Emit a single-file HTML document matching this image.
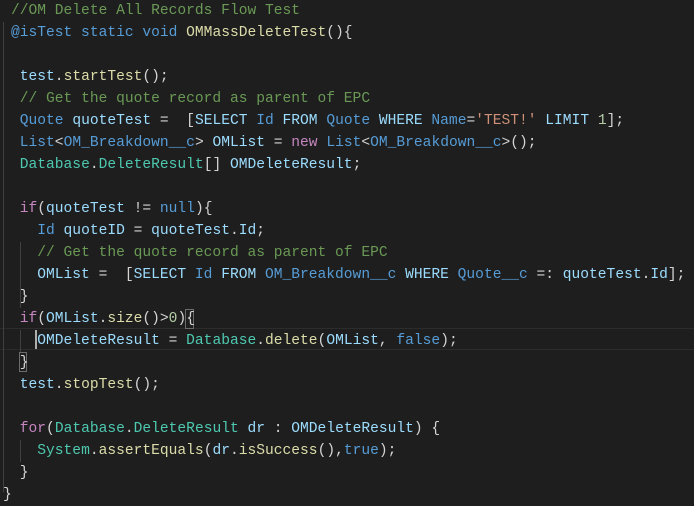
<!DOCTYPE html>
<html><head><style>
html,body{margin:0;padding:0;background:#1e1e1e;}
body{width:694px;height:502px;overflow:hidden;position:relative;font-family:"Liberation Mono",monospace;font-size:14.6px;}
.l{position:absolute;left:11px;height:22px;line-height:22px;white-space:pre;color:#9cdcfe;}
.c{color:#6a9955}.k{color:#569cd6}.p{color:#c586c0}.t{color:#4ec9b0}.f{color:#dcdcaa}.s{color:#ce9178}.n{color:#b5cea8}.w{color:#d4d4d4}
.g{position:absolute;width:1px;background:#404040;}
</style></head><body>
<div style="position:absolute;left:0;top:328px;width:694px;height:20px;border-top:1px solid #2c2c2c;border-bottom:1px solid #2c2c2c;"></div>
<div class="g" style="left:3px;top:22px;height:470px;"></div>
<div class="g" style="left:20px;top:242px;height:66px;"></div>
<div class="g" style="left:20px;top:330px;height:22px;"></div>
<div class="g" style="left:20px;top:440px;height:22px;"></div>
<div style="position:absolute;left:19px;top:352px;width:8px;height:20px;border:1px solid #6b6b6b;box-sizing:border-box;"></div>
<div style="position:absolute;left:185px;top:309px;width:9px;height:20px;border:1px solid #6b6b6b;box-sizing:border-box;"></div>
<div style="position:absolute;left:35px;top:330px;width:2px;height:19px;background:#aeafad;"></div>
<div class="l" style="top:0px"><span class="c">//OM Delete All Records Flow Test</span></div>
<div class="l" style="top:22px"><span class="k">@isTest static void</span> <span class="f">OMMassDeleteTest</span><span class="w">(){</span></div>
<div class="l" style="top:66px"> test<span class="w">.</span><span class="f">startTest</span><span class="w">();</span></div>
<div class="l" style="top:88px"> <span class="c">// Get the quote record as parent of EPC</span></div>
<div class="l" style="top:110px"> <span class="k">Quote</span> quoteTest <span class="w">=  [</span>SELECT <span class="k">Id</span> FROM <span class="k">Quote</span> WHERE <span class="k">Name</span><span class="w">=</span><span class="s">'TEST!'</span> LIMIT <span class="n">1</span><span class="w">];</span></div>
<div class="l" style="top:132px"> <span class="k">List</span><span class="w">&lt;</span><span class="k">OM_Breakdown__c</span><span class="w">&gt;</span> OMList <span class="w">=</span> <span class="p">new</span> <span class="k">List</span><span class="w">&lt;</span><span class="k">OM_Breakdown__c</span><span class="w">&gt;();</span></div>
<div class="l" style="top:154px"> <span class="t">Database</span><span class="w">.</span><span class="t">DeleteResult</span><span class="w">[]</span> OMDeleteResult<span class="w">;</span></div>
<div class="l" style="top:198px"> <span class="p">if</span><span class="w">(</span>quoteTest <span class="w">!=</span> <span class="k">null</span><span class="w">){</span></div>
<div class="l" style="top:220px">   <span class="k">Id</span> quoteID <span class="w">=</span> quoteTest<span class="w">.</span>Id<span class="w">;</span></div>
<div class="l" style="top:242px">   <span class="c">// Get the quote record as parent of EPC</span></div>
<div class="l" style="top:264px">   OMList <span class="w">=  [</span>SELECT <span class="k">Id</span> FROM <span class="k">OM_Breakdown__c</span> WHERE <span class="k">Quote__c</span> <span class="w">=:</span> quoteTest<span class="w">.</span>Id<span class="w">];</span></div>
<div class="l" style="top:286px"> <span class="w">}</span></div>
<div class="l" style="top:308px"> <span class="p">if</span><span class="w">(</span>OMList<span class="w">.</span><span class="f">size</span><span class="w">()&gt;</span><span class="n">0</span><span class="w">){</span></div>
<div class="l" style="top:330px">   OMDeleteResult <span class="w">=</span> <span class="t">Database</span><span class="w">.</span><span class="f">delete</span><span class="w">(</span>OMList<span class="w">,</span> <span class="k">false</span><span class="w">);</span></div>
<div class="l" style="top:352px"> <span class="w">}</span></div>
<div class="l" style="top:374px"> test<span class="w">.</span><span class="f">stopTest</span><span class="w">();</span></div>
<div class="l" style="top:418px"> <span class="p">for</span><span class="w">(</span><span class="t">Database</span><span class="w">.</span><span class="t">DeleteResult</span> dr <span class="w">:</span> OMDeleteResult<span class="w">) {</span></div>
<div class="l" style="top:440px">   <span class="t">System</span><span class="w">.</span><span class="f">assertEquals</span><span class="w">(</span>dr<span class="w">.</span><span class="f">isSuccess</span><span class="w">(),</span><span class="k">true</span><span class="w">);</span></div>
<div class="l" style="top:462px"> <span class="w">}</span></div>
<div class="l" style="top:484px;left:3px"><span class="w">}</span></div>
</body></html>
